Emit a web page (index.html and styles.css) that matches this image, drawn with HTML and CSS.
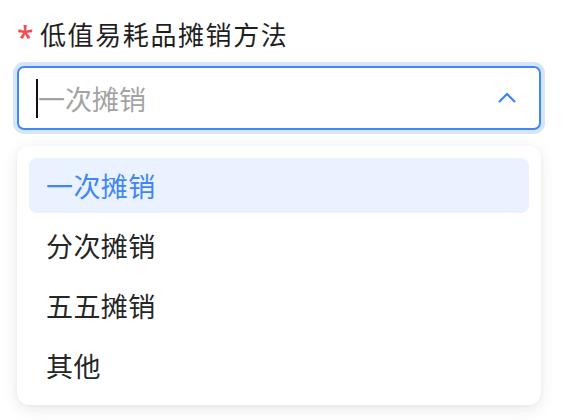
FILE: index.html
```html
<!DOCTYPE html>
<html lang="zh">
<head>
<meta charset="utf-8">
<link rel="stylesheet" href="styles.css">
</head>
<body>
<div class="field">
  <div class="label"><span class="req">*</span><span class="label-text">低值易耗品摊销方法</span></div>
  <div class="select">
    <span class="caret"></span><span class="placeholder">一次摊销</span>
    <svg class="chevron" width="20" height="12" viewBox="0 0 20 12"><path d="M2 10 L10 2 L18 10" fill="none" stroke="#3b82f6" stroke-width="2.2" stroke-linejoin="miter" stroke-linecap="butt"/></svg>
  </div>
  <div class="menu">
    <div class="item active">一次摊销</div>
    <div class="item">分次摊销</div>
    <div class="item">五五摊销</div>
    <div class="item">其他</div>
  </div>
</div>
</body>
</html>
```

FILE: styles.css
```css
html, body {
  margin: 0;
  padding: 0;
  background: #ffffff;
}
body {
  font-family: "Noto Sans CJK SC", "Noto Sans", sans-serif;
  width: 566px;
  height: 420px;
  overflow: hidden;
}
.field {
  padding: 15px 0 0 17px;
  width: 524px;
}
.label {
  display: flex;
  align-items: center;
  height: 36px;
  font-size: 26px;
  color: #1f1f1f;
}
.req {
  color: #ee4d52;
  font-family: "Noto Sans", sans-serif;
  font-size: 30px;
  font-weight: 500;
  width: 23px;
  position: relative;
  top: 3px;
}
.label-text {
  letter-spacing: 1.6px;
}
.select {
  margin-top: 15px;
  height: 60px;
  border: 2px solid #4088f4;
  border-radius: 7px;
  box-shadow: 0 0 0 4px #d4e5fc;
  display: flex;
  align-items: center;
  padding: 0 22px 0 17px;
}
.caret {
  width: 2px;
  height: 39px;
  background: #111;
  margin-right: 0;
}
.placeholder {
  font-size: 27px;
  color: #a3a3a3;
  flex: 1;
}
.chevron {
  display: block;
}
.menu {
  margin-top: 16px;
  background: #fff;
  border-radius: 12px;
  box-shadow: 0 4px 16px rgba(0, 0, 0, 0.09), 0 1px 4px rgba(0, 0, 0, 0.04);
  padding: 12px;
  display: flex;
  flex-direction: column;
  gap: 5px;
}
.item {
  height: 55px;
  display: flex;
  align-items: center;
  padding-left: 17px;
  font-size: 27px;
  letter-spacing: 0.4px;
  color: #262626;
  border-radius: 8px;
}
.item.active {
  background: #ebf2ff;
  color: #3e86f5;
}
```
